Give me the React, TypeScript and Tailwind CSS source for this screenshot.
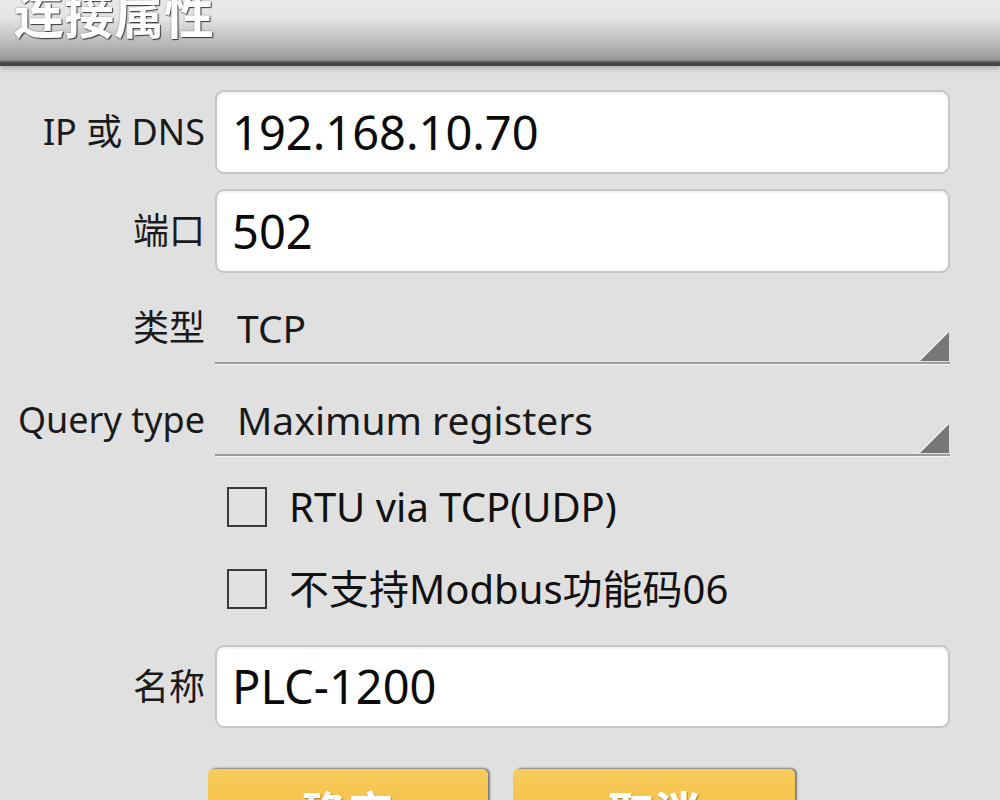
import React from "react";

const font = "font-['Noto_Sans','Noto_Sans_CJK_SC',sans-serif]";

function Triangle() {
  return (
    <svg
      className="absolute right-0 bottom-0"
      width="32"
      height="32"
      viewBox="0 0 32 32"
    >
      <polygon points="31,1 31,31 1,31" fill="#777777" />
      <line x1="1" y1="31" x2="31" y2="1" stroke="#f4f4f4" strokeWidth="1.5" />
    </svg>
  );
}

function Dropdown({ label, value }: { label: string; value: string }) {
  return (
    <>
      <div className="text-right text-[36px] text-[#1a1a1a] self-center pb-[2px] whitespace-nowrap">
        {label}
      </div>
      <div className="relative h-[70px] flex items-center pl-[22px] text-[39px] text-[#1a1a1a] border-b-2 border-[#9c9c9c] shadow-[0_1px_0_#f6f6f6]">
        {value}
        <Triangle />
      </div>
    </>
  );
}

function TextField({ label, value, h }: { label: string; value: string; h: string }) {
  return (
    <>
      <div className="text-right text-[36px] text-[#1a1a1a] self-center whitespace-nowrap">
        {label}
      </div>
      <div
        className={`${h} flex items-center pl-[15px] bg-white rounded-[9px] border-2 border-[#c6c6c6] shadow-[inset_0_2px_2px_rgba(0,0,0,0.06)] text-[47px] text-[#0a0a0a]`}
      >
        {value}
      </div>
    </>
  );
}

function Check({ text }: { text: string }) {
  return (
    <div className="flex items-center pl-[12px] gap-[22px]">
      <div className="w-[40px] h-[40px] border-2 border-[#3a3a3a] bg-[#e2e2e2]" />
      <span className="text-[40px] text-[#111] whitespace-nowrap">{text}</span>
    </div>
  );
}

export default function App() {
  return (
    <div className={`w-[1000px] h-[800px] overflow-hidden bg-[#e0e0e0] ${font}`}>
      {/* Title bar */}
      <div className="flex flex-col h-[66px] bg-[linear-gradient(to_bottom,#e9e9e9_0%,#e4e4e4_28%,#b4b4b4_70%,#9a9a9a_90%,#4c4c4c_95%,#3e3e3e_100%)] shadow-[0_3px_5px_rgba(0,0,0,0.2)]">
        <div className="pl-[14px] mt-[-10px] text-[50px] font-semibold leading-none text-white [text-shadow:1px_1px_1px_rgba(0,0,0,0.7),0_0_2px_rgba(0,0,0,0.4)]">
          连接属性
        </div>
      </div>

      <div className="grid grid-cols-[205px_735px] gap-x-[10px] pt-[24px]">
        <TextField label="IP 或 DNS" value="192.168.10.70" h="h-[84px]" />
        <div className="h-[15px] col-span-2" />
        <TextField label="端口" value="502" h="h-[84px]" />

        <div className="h-[21px] col-span-2" />
        <Dropdown label="类型" value="TCP" />
        <div className="h-[22px] col-span-2" />
        <Dropdown label="Query type" value="Maximum registers" />

        <div className="col-start-2 h-[102px] flex items-center">
          <Check text="RTU via TCP(UDP)" />
        </div>
        <div className="col-start-2 h-[62px] flex items-center">
          <Check text="不支持Modbus功能码06" />
        </div>

        <div className="h-[25px] col-span-2" />
        <TextField label="名称" value="PLC-1200" h="h-[83px]" />
      </div>

      {/* Buttons */}
      <div className="flex gap-[25px] pl-[208px] mt-[41px]">
        <button className="w-[280px] h-[80px] rounded-[6px] bg-[linear-gradient(to_bottom,#f8cb5c,#f2b935)] shadow-[2px_-1px_2px_rgba(0,0,0,0.45)] text-white text-[46px] font-semibold leading-none pt-[20px] flex justify-center items-start [text-shadow:1px_1px_1px_rgba(0,0,0,0.35)]">
          确定
        </button>
        <button className="w-[282px] h-[80px] rounded-[6px] bg-[linear-gradient(to_bottom,#f8cb5c,#f2b935)] shadow-[2px_-1px_2px_rgba(0,0,0,0.45)] text-white text-[46px] font-semibold leading-none pt-[20px] flex justify-center items-start [text-shadow:1px_1px_1px_rgba(0,0,0,0.35)]">
          取消
        </button>
      </div>
    </div>
  );
}
